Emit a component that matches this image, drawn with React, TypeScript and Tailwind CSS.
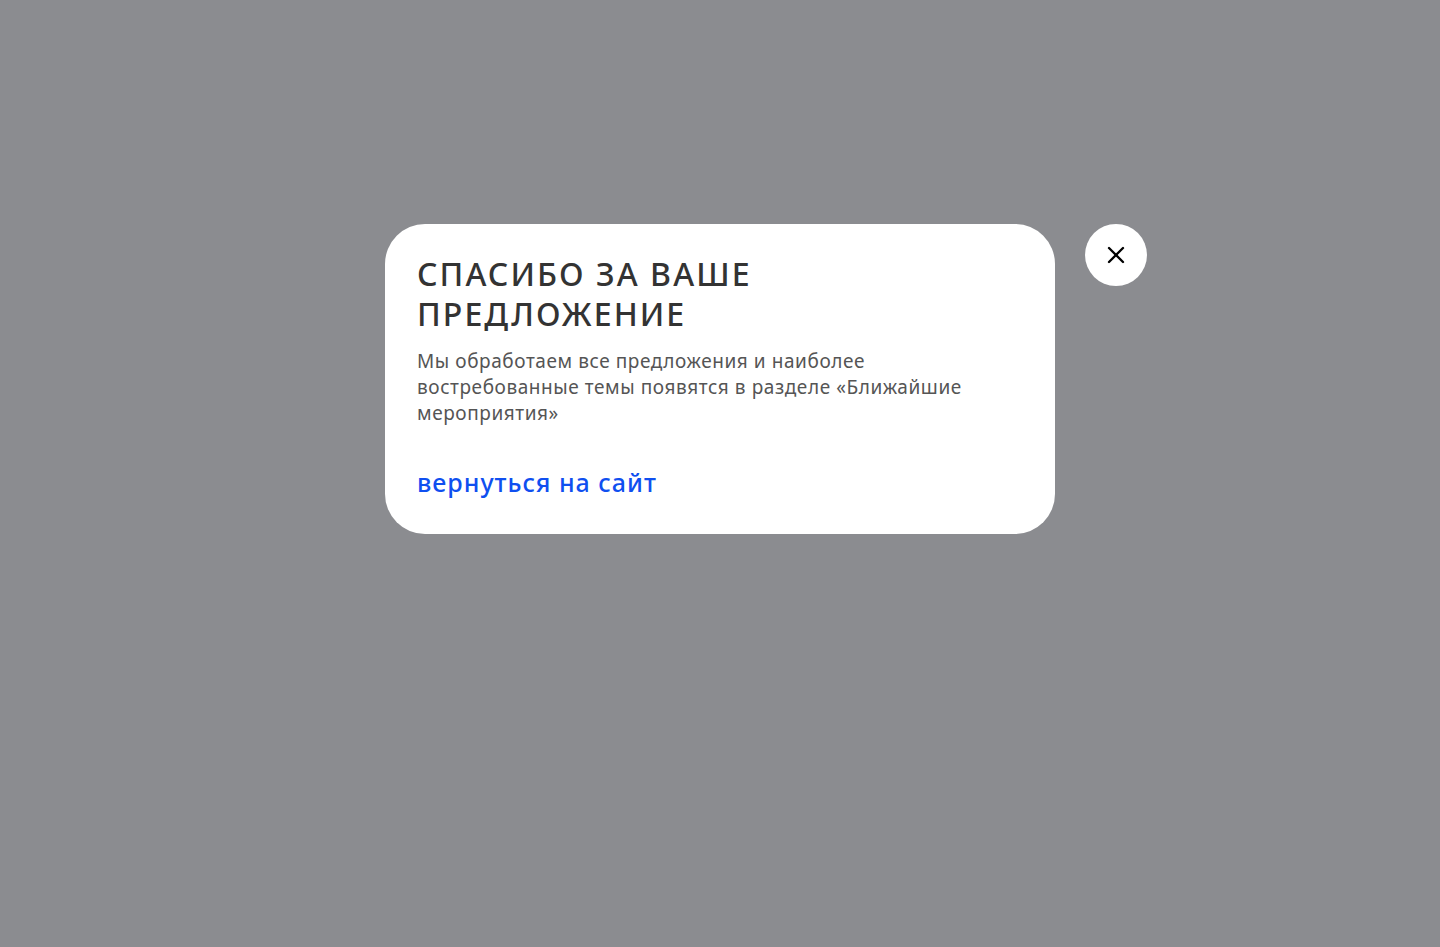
import { X } from 'lucide-react';

export default function App() {
  return (
    <div
      className="min-h-[947px] w-full bg-[#8b8c90] pt-[224px]"
      style={{ fontFamily: '"Noto Sans", "Open Sans", sans-serif' }}
    >
      <div className="relative mx-auto w-[670px]">
        {/* Modal card */}
        <div className="flex flex-col rounded-[40px] bg-white px-8 pt-[30px] pb-[36px]">
          <h2 className="text-[32px] leading-[40px] font-medium tracking-[0.065em] text-[#333333]">
            СПАСИБО ЗА ВАШЕ
            <br />
            ПРЕДЛОЖЕНИЕ
          </h2>
          <p className="mt-[14px] max-w-[570px] text-[19px] leading-[26px] tracking-[0.03em] text-[#555555]">
            Мы обработаем все предложения и наиболее востребованные темы появятся в разделе «Ближайшие мероприятия»
          </p>
          <a
            href="#"
            className="mt-[40px] self-start text-[25px] leading-[32px] font-medium tracking-[0.04em] text-[#0f4ff0]"
          >
            вернуться на сайт
          </a>
        </div>

        {/* Close button */}
        <button className="absolute top-0 left-[700px] flex h-[62px] w-[62px] items-center justify-center rounded-full bg-white text-black">
          <X size={28} strokeWidth={2} />
        </button>
      </div>
    </div>
  );
}
